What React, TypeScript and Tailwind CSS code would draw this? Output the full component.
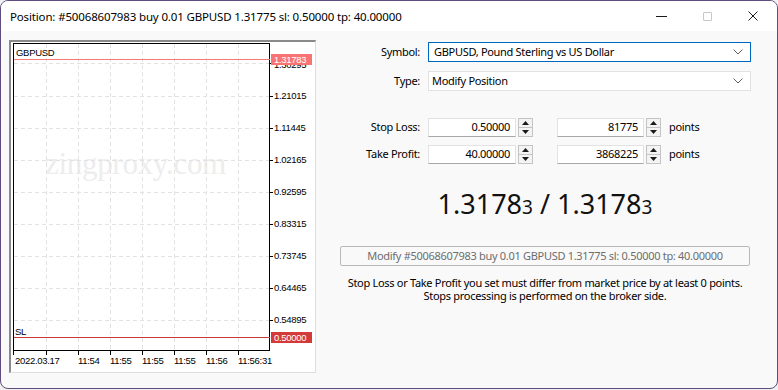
const priceLabels = [
  { y: 57, v: "1.21015" },
  { y: 89, v: "1.11445" },
  { y: 121, v: "1.02165" },
  { y: 153, v: "0.92595" },
  { y: 185, v: "0.83315" },
  { y: 217, v: "0.73745" },
  { y: 249, v: "0.64465" },
  { y: 281, v: "0.54895" },
];

const gridY = [21, 54, 86, 118, 150, 182, 214, 246, 278];
const gridX = [35.5, 67.5, 99.5, 131.5, 163.5, 195.5, 227.5];
const timeLabels = ["11:54", "11:55", "11:55", "11:55", "11:56", "11:56:31"];

const Chart = () => (
  <svg width="304" height="330" className="block" style={{ fontFamily: '"Liberation Sans", Arial, sans-serif' }}>
    <rect x="0" y="0" width="304" height="330" fill="#ffffff" />
    {/* watermark */}
    <text x="34" y="132" fontSize="31" fill="#ededed" style={{ fontFamily: '"Liberation Serif", serif' }}>
      zingproxy.com
    </text>
    {/* grid */}
    {gridY.map((y) => (
      <line key={"h" + y} x1="3" x2="258" y1={y + 0.5} y2={y + 0.5} stroke="#e2e2e2" strokeDasharray="4 3" />
    ))}
    {gridX.map((x) => (
      <line key={"v" + x} x1={x} x2={x} y1="2" y2="308" stroke="#e2e2e2" strokeDasharray="4 3" />
    ))}
    {/* price ticks */}
    {gridY.map((y) => (
      <line key={"pt" + y} x1="259" x2="262" y1={y + 0.5} y2={y + 0.5} stroke="#000" />
    ))}
    {/* time ticks */}
    {[2.5, ...gridX].map((x) => (
      <line key={"tt" + x} x1={x} x2={x} y1="309" y2="313" stroke="#000" />
    ))}
    <rect x="2.5" y="1.5" width="256" height="307" fill="none" stroke="#000" />
    <text x="5" y="13.5" fontSize="9.5" fill="#000">GBPUSD</text>
    <text x="4" y="293" fontSize="9.5" fill="#000">SL</text>
    {/* price axis */}
    <text x="263" y="26" fontSize="9.5" fill="#000">1.30295</text>
    {priceLabels.map((p) => (
      <text key={p.v} x="263" y={p.y} fontSize="9.5" fill="#000">{p.v}</text>
    ))}
    {/* current price line */}
    <line x1="3" x2="259" y1="17.5" y2="17.5" stroke="#f47a7a" />
    <rect x="260" y="12" width="41" height="11" fill="#f87474" />
    <text x="263" y="21" fontSize="9.5" fill="#ffffff">1.31783</text>
    {/* stop loss line */}
    <line x1="3" x2="259" y1="295.5" y2="295.5" stroke="#c83c3c" />
    <rect x="260" y="290" width="41" height="11" fill="#d43a3a" />
    <text x="263" y="299" fontSize="9.5" fill="#ffffff">0.50000</text>
    {/* time axis */}
    <text x="4" y="322" fontSize="9.5" fill="#000">2022.03.17</text>
    {timeLabels.map((t, i) => (
      <text key={i} x={gridX[i + 1] - 0.5} y="322" fontSize="9.5" fill="#000">{t}</text>
    ))}
  </svg>
);

const Chevron = () => (
  <svg width="10" height="6" viewBox="0 0 10 6" className="ml-auto mr-[7px]">
    <polyline points="0.5,0.5 5,5 9.5,0.5" fill="none" stroke="#606060" strokeWidth="1" />
  </svg>
);

const Spinner = () => (
  <div className="ml-[2px] w-[15px] h-[19px] border border-[#c4c4c4] bg-[#f3f3f3] flex flex-col">
    <div className="flex-1 flex items-center justify-center border-b border-[#c4c4c4]">
      <svg width="7" height="4" viewBox="0 0 7 4">
        <polygon points="0,4 3.5,0 7,4" fill="#1a1a1a" />
      </svg>
    </div>
    <div className="flex-1 flex items-center justify-center">
      <svg width="7" height="4" viewBox="0 0 7 4">
        <polygon points="0,0 7,0 3.5,4" fill="#1a1a1a" />
      </svg>
    </div>
  </div>
);

const NumInput = ({ value, w }: { value: string; w: string }) => (
  <div className={`${w} h-[19px] bg-white border border-[#e2e2e2] border-b-[#a8a8a8] flex items-center justify-end pr-[5px]`}>
    {value}
  </div>
);

const StopRow = ({ label, price, points }: { label: string; price: string; points: string }) => (
  <div className="flex items-center">
    <div className="w-[91px] text-right">{label}</div>
    <div className="ml-[8px] flex items-center">
      <NumInput value={price} w="w-[88px]" />
      <Spinner />
    </div>
    <div className="ml-[24px] flex items-center">
      <NumInput value={points} w="w-[87px]" />
      <Spinner />
    </div>
    <div className="ml-[8px]">points</div>
  </div>
);

export default function App() {
  return (
    <div className="w-[778px] h-[390px] bg-[#f0f0f0]">
      <div
        className="w-[778px] h-[389px] border border-[#5e4d7e] rounded-[8px] overflow-hidden flex flex-col bg-[#f9f9f9] text-[11px] tracking-[-0.3px] text-black"
        style={{ fontFamily: '"Noto Sans", "Open Sans", sans-serif' }}
      >
        {/* title bar */}
        <div className="h-[30px] bg-white flex items-center pl-[9px] shrink-0">
          <div className="text-[11.5px] tracking-[-0.15px] leading-none pt-[2px] whitespace-nowrap">
            Position: #50068607983 buy 0.01 GBPUSD 1.31775 sl: 0.50000 tp: 40.00000
          </div>
          <div className="ml-auto flex items-center h-full">
            <div className="w-[46px] flex justify-center">
              <div className="w-[11px] h-px bg-[#1a1a1a]" />
            </div>
            <div className="w-[46px] flex justify-center">
              <div className="w-[9px] h-[9px] border border-[#c8c8c8] rounded-[1px]" />
            </div>
            <div className="w-[46px] flex justify-center mr-[1px]">
              <svg width="10" height="10" viewBox="0 0 10 10">
                <path d="M0.5 0.5 L9.5 9.5 M9.5 0.5 L0.5 9.5" stroke="#1a1a1a" strokeWidth="1" />
              </svg>
            </div>
          </div>
        </div>

        {/* client area */}
        <div className="flex pt-[9px]">
          <div className="ml-[8px] w-[307px] h-[333px] border-l-2 border-t-2 border-l-[#8a8a8a] border-t-[#8a8a8a] border-r border-b border-r-[#dedede] border-b-[#dedede] bg-white">
            <Chart />
          </div>

          <div className="ml-[13px] pt-[2px] flex flex-col">
            <div className="flex items-center">
              <div className="w-[91px] text-right">Symbol:</div>
              <div className="ml-[8px] w-[323px] h-[20px] bg-white border border-[#0067c0] flex items-center pl-[5px] whitespace-nowrap">
                GBPUSD, Pound Sterling vs US Dollar
                <Chevron />
              </div>
            </div>
            <div className="flex items-center mt-[9px]">
              <div className="w-[91px] text-right">Type:</div>
              <div className="ml-[8px] w-[323px] h-[20px] bg-white border border-[#e2e2e2] flex items-center pl-[3px] whitespace-nowrap">
                Modify Position
                <Chevron />
              </div>
            </div>

            <div className="mt-[27px]">
              <StopRow label="Stop Loss:" price="0.50000" points="81775" />
            </div>
            <div className="mt-[8px]">
              <StopRow label="Take Profit:" price="40.00000" points="3868225" />
            </div>

            <div className="ml-[11px] w-[410px] flex flex-col items-center">
              <div className="mt-[24px] h-[31px] leading-[31px] text-[27px] tracking-normal text-[#111] whitespace-nowrap">
                1.3178<span className="text-[19px]">3</span> / 1.3178<span className="text-[19px]">3</span>
              </div>
              <div className="mt-[27px] w-[410px] h-[20px] border border-[#b8b8b8] rounded-[2px] flex items-center justify-center text-[#6d6d6d] whitespace-nowrap">
                Modify #50068607983 buy 0.01 GBPUSD 1.31775 sl: 0.50000 tp: 40.00000
              </div>
              <div className="mt-[10px] leading-[13px] text-center whitespace-nowrap">
                <div>Stop Loss or Take Profit you set must differ from market price by at least 0 points.</div>
                <div>Stops processing is performed on the broker side.</div>
              </div>
            </div>
          </div>
        </div>
      </div>
    </div>
  );
}
